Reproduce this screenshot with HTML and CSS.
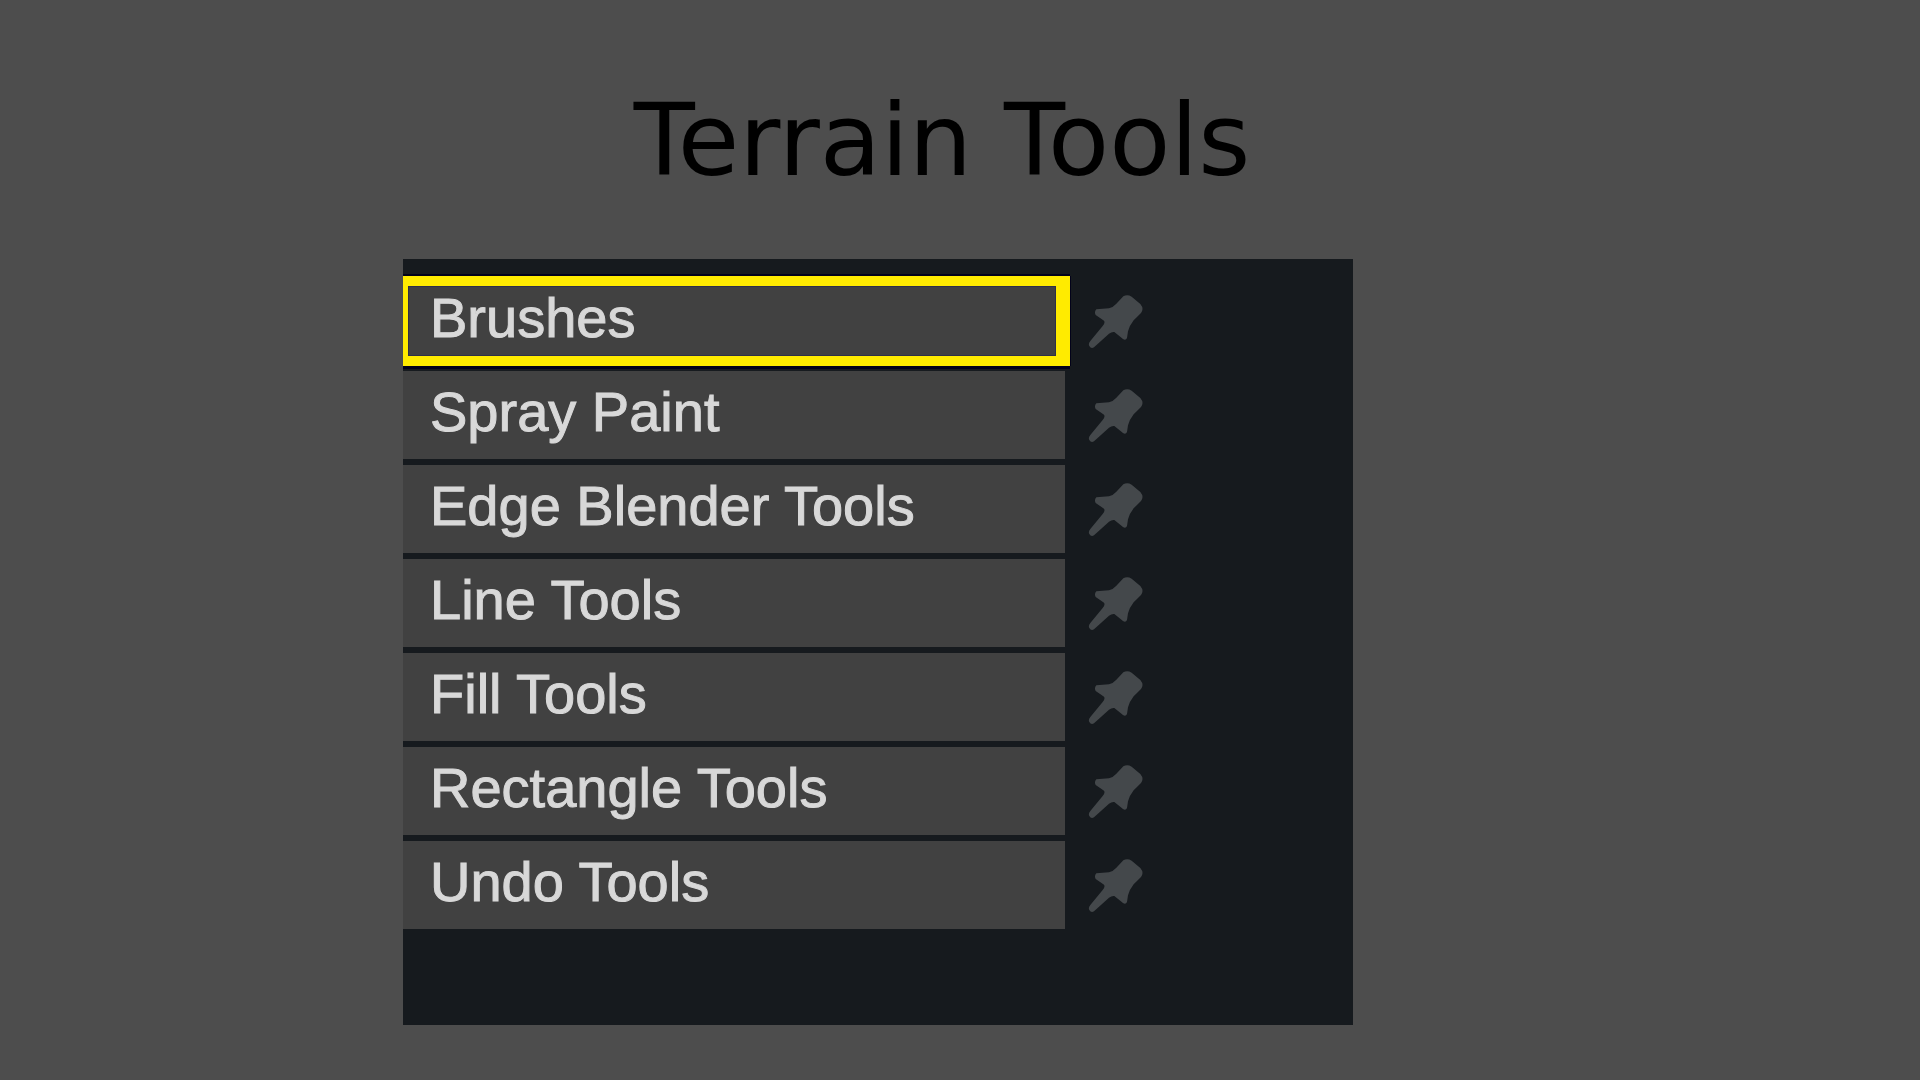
FILE: index.html
```html
<!DOCTYPE html>
<html lang="en">
<head>
<meta charset="utf-8">
<title>Terrain Tools</title>
<link rel="stylesheet" href="styles.css">
</head>
<body>
<svg class="defs" aria-hidden="true">
  <symbol id="pin" viewBox="322 134 168 168">
    <path d="M431 141Q443 134 456 142L482 164Q494 178 484 191Q470 205 462 213Q450 228 445 246L442 266Q438 275 430 269L404 248Q396 247 388 253L343 294Q334 299 329 290Q325 284 332 275L369 230Q379 218 371 213L348 197Q343 187 350 180L388 177Q400 174 410 163Z"/>
  </symbol>
</svg>
<header class="header"><h1 class="title">Terrain Tools</h1></header>
<main class="stage">
  <ul class="panel">
    <li class="row"><button class="tool tool-selected">Brushes</button><button class="pin" aria-label="Pin Brushes"><svg class="icon"><use href="#pin"/></svg></button></li>
    <li class="row"><button class="tool">Spray Paint</button><button class="pin" aria-label="Pin Spray Paint"><svg class="icon"><use href="#pin"/></svg></button></li>
    <li class="row"><button class="tool">Edge Blender Tools</button><button class="pin" aria-label="Pin Edge Blender Tools"><svg class="icon"><use href="#pin"/></svg></button></li>
    <li class="row"><button class="tool">Line Tools</button><button class="pin" aria-label="Pin Line Tools"><svg class="icon"><use href="#pin"/></svg></button></li>
    <li class="row"><button class="tool">Fill Tools</button><button class="pin" aria-label="Pin Fill Tools"><svg class="icon"><use href="#pin"/></svg></button></li>
    <li class="row"><button class="tool">Rectangle Tools</button><button class="pin" aria-label="Pin Rectangle Tools"><svg class="icon"><use href="#pin"/></svg></button></li>
    <li class="row"><button class="tool">Undo Tools</button><button class="pin" aria-label="Pin Undo Tools"><svg class="icon"><use href="#pin"/></svg></button></li>
  </ul>
</main>
</body>
</html>
```
FILE: styles.css
```css
* { box-sizing: border-box; }

body {
  margin: 0;
  min-height: 100vh;
  background: #4d4d4d;
}

.defs { display: none; }

.header { padding: 83px 36px 60px 0; }

.title {
  margin: 0;
  font: 400 100px/116px "DejaVu Sans", sans-serif;
  text-align: center;
  color: #000;
}

.stage {
  display: grid;
  grid-template-columns: 403fr 950fr 567fr;
}

.panel {
  grid-column: 2;
  display: flex;
  flex-direction: column;
  gap: 6px;
  margin: 0;
  padding: 18px 0 96px;
  list-style: none;
  background: #161a1e;
}

.row {
  display: grid;
  grid-template-columns: 662fr 288fr;
  align-items: center;
}

.tool {
  position: relative;
  padding: 0 24px 6px 27px;
  border: 0;
  background: #414141;
  color: #d8d8d8;
  font: 400 56px/82px "Liberation Sans", Arial, sans-serif;
  -webkit-text-stroke: 1px #d8d8d8;
  text-align: left;
  white-space: nowrap;
}

/* The selection frame overlaps the button's edges */
.tool-selected::after {
  content: "";
  position: absolute;
  inset: -1px -5px -1px 0;
  border: solid #ffeb00;
  border-width: 10px 14px 10px 5px;
  box-shadow: 0 -2px 0 #02021a, 0 3px 0 #02021a, 1px 0 0 #02021a, inset 0 0 0 1px #2e3048;
}

.pin {
  justify-self: start;
  margin-left: 22px;
  padding: 2px 0 0;
  border: 0;
  background: none;
  color: #44484b;
}

.icon {
  display: block;
  width: 56px;
  height: 56px;
  fill: currentColor;
}
```
